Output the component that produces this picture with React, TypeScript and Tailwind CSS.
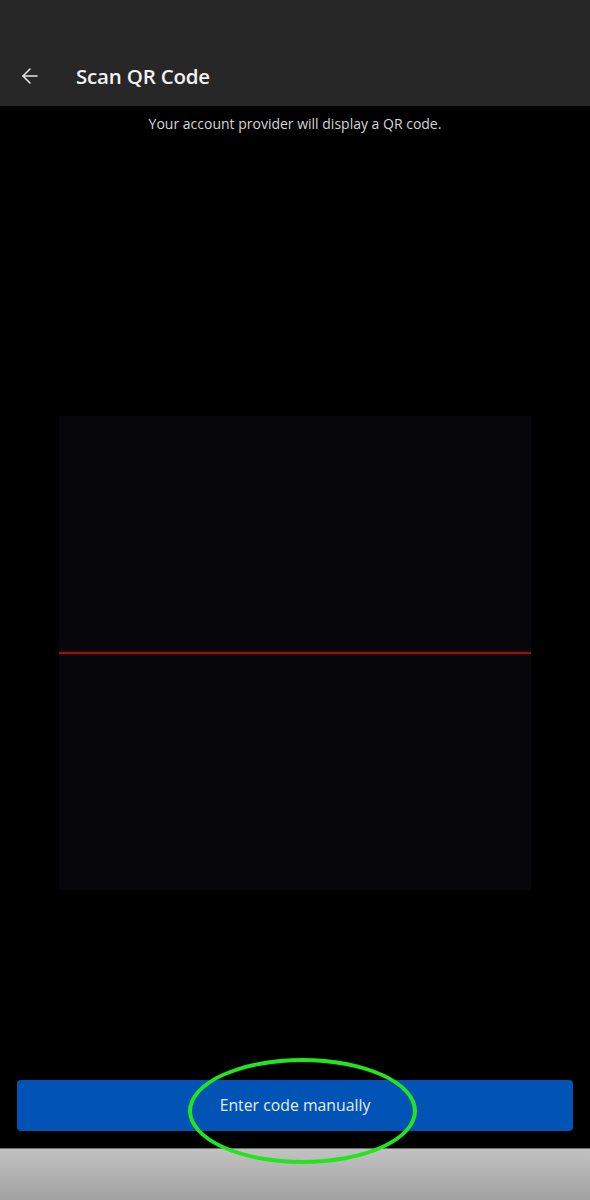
import { ArrowLeft } from 'lucide-react'

export default function App() {
  return (
    <div
      className="relative flex h-[1200px] w-[590px] flex-col overflow-hidden bg-black text-white"
      style={{ fontFamily: '"Open Sans", "Noto Sans", sans-serif' }}
    >
      {/* Header */}
      <div className="flex h-[106px] items-end bg-[#272727] pb-[14px]">
        <div className="flex h-[32px] items-center">
          <ArrowLeft className="ml-[18px] h-[24px] w-[24px] text-[#e8e8e8]" strokeWidth={1.5} />
          <span className="ml-[34px] text-[20.5px] font-semibold tracking-[-0.2px] text-[#f2f2f2]">
            Scan QR Code
          </span>
        </div>
      </div>

      {/* Camera view */}
      <div className="flex flex-1 flex-col items-center">
        <p className="mt-[9px] text-[14px] leading-[18px] text-[#d6d6d6]">
          Your account provider will display a QR code.
        </p>

        <div className="mt-[283px] flex h-[474px] w-[472px] items-center bg-[#07060a]">
          <div className="h-[2px] w-full bg-[#8e1414] shadow-[0_0_3px_#6b0f0f]" />
        </div>

        <button className="mt-[190px] flex h-[51px] w-[556px] items-center justify-center rounded-[4px] bg-[#0153b5] text-[15.8px] text-[#e4ecf7]">
          Enter code manually
        </button>
      </div>

      {/* Bottom bar */}
      <div className="mt-[17px] h-[52px] border-t border-[#6e6e6e] bg-gradient-to-b from-[#c2c2c2] to-[#a2a2a2]" />

      {/* Highlight annotation */}
      <div className="pointer-events-none absolute left-[188px] top-[1058px] h-[106px] w-[229px] rounded-[50%] border-[4px] border-[#22e51c]" />
    </div>
  )
}
